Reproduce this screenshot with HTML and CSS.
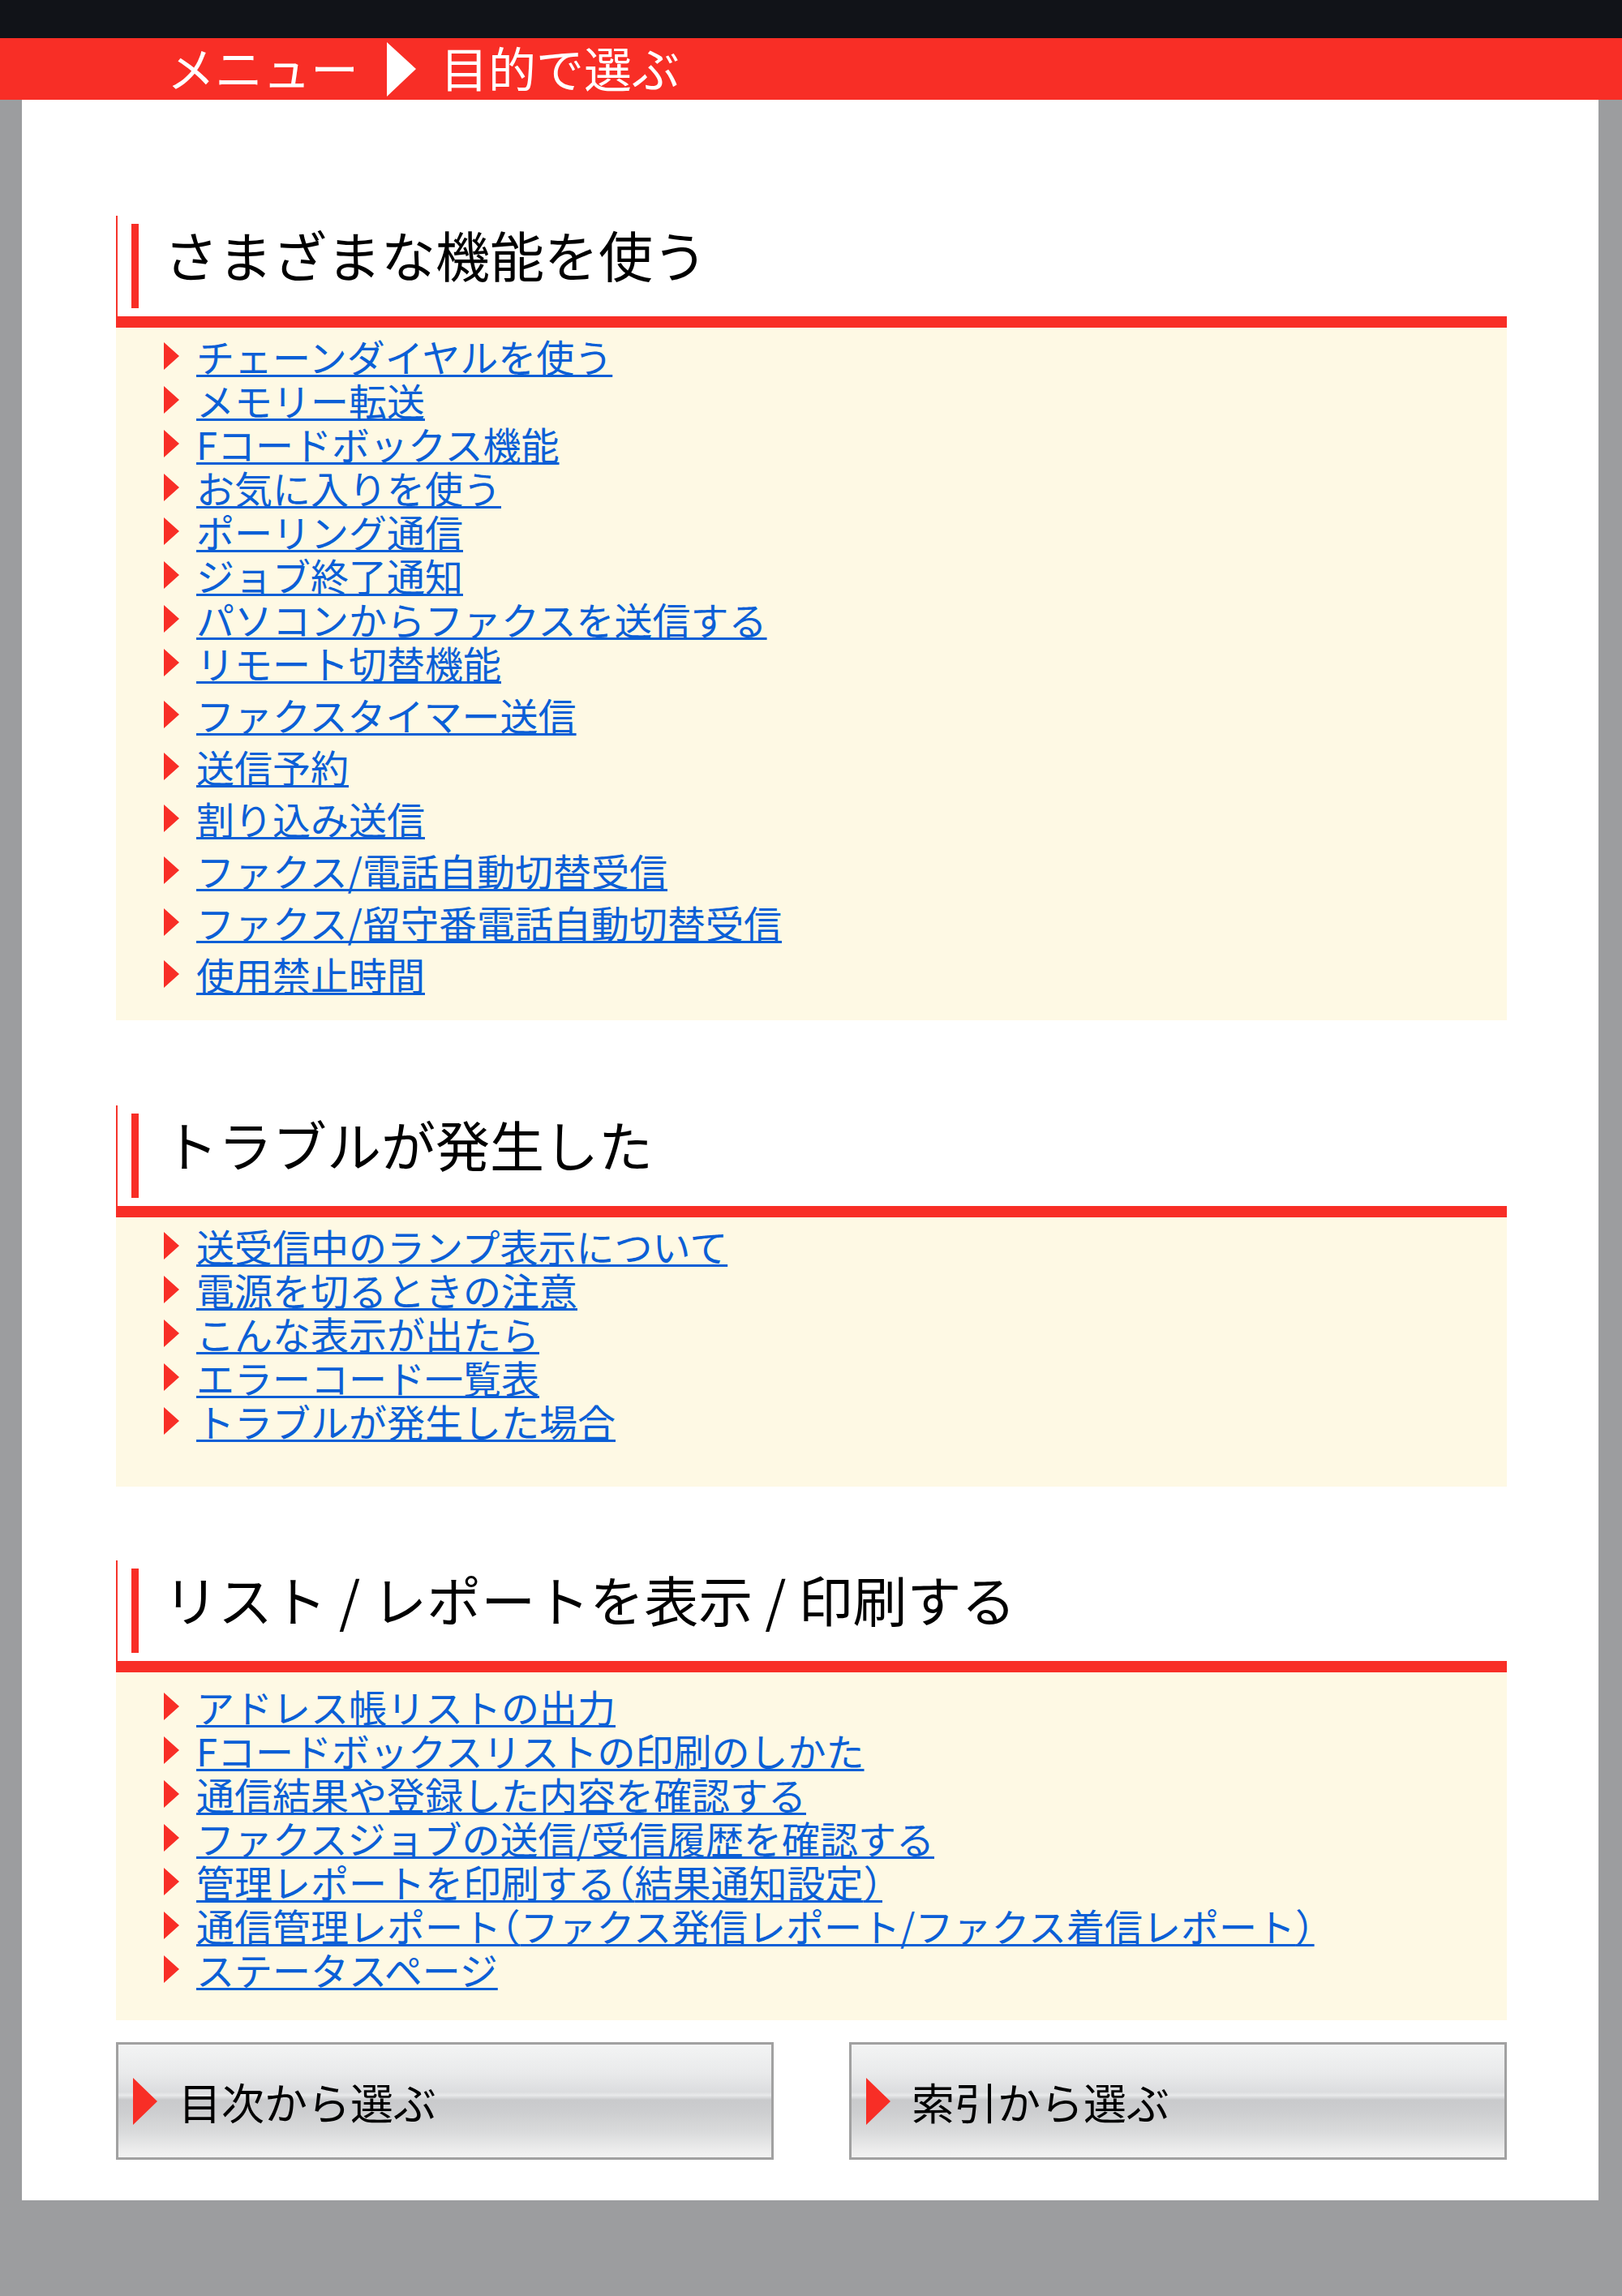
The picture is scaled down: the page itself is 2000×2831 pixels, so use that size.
FILE: index.html
```html
<!DOCTYPE html>
<html lang="ja">
<head>
<meta charset="utf-8">
<title>目的で選ぶ</title>
<link rel="stylesheet" href="styles.css">
</head>
<body>
<div class="statusbar"></div>
<header class="titlebar">
  <span class="crumb">メニュー</span>
  <span class="crumb-arrow"></span>
  <span class="crumb">目的で選ぶ</span>
</header>
<div class="frame">
  <main class="page">
    <section class="group g1">
      <h2 class="group-title"><span>さまざまな機能を使う</span></h2>
      <ul class="links">
        <li><a href="#">チェーンダイヤルを使う</a></li>
        <li><a href="#">メモリー転送</a></li>
        <li><a href="#">Fコードボックス機能</a></li>
        <li><a href="#">お気に入りを使う</a></li>
        <li><a href="#">ポーリング通信</a></li>
        <li><a href="#">ジョブ終了通知</a></li>
        <li><a href="#">パソコンからファクスを送信する</a></li>
        <li><a href="#">リモート切替機能</a></li>
        <li class="spaced"><a href="#">ファクスタイマー送信</a></li>
        <li class="spaced"><a href="#">送信予約</a></li>
        <li class="spaced"><a href="#">割り込み送信</a></li>
        <li class="spaced"><a href="#">ファクス/電話自動切替受信</a></li>
        <li class="spaced"><a href="#">ファクス/留守番電話自動切替受信</a></li>
        <li class="spaced"><a href="#">使用禁止時間</a></li>
      </ul>
    </section>
    <section class="group g2">
      <h2 class="group-title"><span>トラブルが発生した</span></h2>
      <ul class="links">
        <li><a href="#">送受信中のランプ表示について</a></li>
        <li><a href="#">電源を切るときの注意</a></li>
        <li><a href="#">こんな表示が出たら</a></li>
        <li><a href="#">エラーコード一覧表</a></li>
        <li><a href="#">トラブルが発生した場合</a></li>
      </ul>
    </section>
    <section class="group g3">
      <h2 class="group-title"><span>リスト / レポートを表示 / 印刷する</span></h2>
      <ul class="links">
        <li><a href="#">アドレス帳リストの出力</a></li>
        <li><a href="#">Fコードボックスリストの印刷のしかた</a></li>
        <li><a href="#">通信結果や登録した内容を確認する</a></li>
        <li><a href="#">ファクスジョブの送信/受信履歴を確認する</a></li>
        <li><a href="#">管理レポートを印刷する<span class="paren">（</span>結果通知設定<span class="paren">）</span></a></li>
        <li><a href="#">通信管理レポート<span class="paren">（</span>ファクス発信レポート/ファクス着信レポート<span class="paren">）</span></a></li>
        <li><a href="#">ステータスページ</a></li>
      </ul>
    </section>
    <nav class="btns">
      <a class="btn" href="#">目次から選ぶ</a>
      <a class="btn" href="#">索引から選ぶ</a>
    </nav>
  </main>
</div>
</body>
</html>
```
FILE: styles.css
```css
* { box-sizing: border-box; }

body {
  margin: 0;
  background: #9c9d9f;
  font-family: "Noto Sans CJK JP", "Noto Sans", sans-serif;
}

.statusbar {
  height: 47px;
  background: #111318;
}

.titlebar {
  height: 76px;
  background: #f82e26;
  display: flex;
  align-items: center;
  padding-left: 206px;
  padding-bottom: 6px;
  color: #fff;
  font-size: 59px;
  line-height: 1;
}

.crumb-arrow {
  width: 0;
  height: 0;
  border-left: 36px solid #fff;
  border-top: 33px solid transparent;
  border-bottom: 34px solid transparent;
  margin: 6px 30px 0 35px;
}

.frame {
  padding: 0 29px 118px 27px;
}

.page {
  background: #fff;
  padding: 143px 113px 50px 116px;
}

.group-title {
  margin: 0;
  height: 124px;
  border-left: 2px solid #f6342b;
  padding-left: 17px;
  display: flex;
  align-items: center;
  font-weight: normal;
  font-size: 67px;
  line-height: 80px;
  color: #000;
}

.group-title::before {
  content: "";
  flex: none;
  width: 9px;
  height: 104px;
  background: #f82e26;
  margin-right: 31px;
}

.group-title span {
  margin-bottom: 30px;
  white-space: pre;
}

.links {
  list-style: none;
  margin: 0;
  border-top: 14px solid #f82e26;
  background: #fef9e4;
  padding: 8px 0 30px 59px;
}

.links li {
  display: flex;
  align-items: center;
  height: 54px;
  font-size: 47px;
  line-height: 54px;
}

.links li::before {
  content: "";
  flex: none;
  width: 0;
  height: 0;
  border-left: 19px solid #f82e26;
  border-top: 17px solid transparent;
  border-bottom: 17px solid transparent;
  margin-right: 21px;
}

.links li.spaced {
  margin-top: 10px;
}

.links a {
  color: #0b5fd6;
  text-decoration: underline;
  text-decoration-thickness: 3px;
  text-underline-offset: 3px;
}

.paren {
  font-feature-settings: "halt";
}

.g2 { margin-top: 105px; }
.g2 .links { padding-bottom: 54px; }

.g3 { margin-top: 91px; }
.g3 .links { padding-top: 15px; padding-bottom: 36px; }

.btns {
  display: grid;
  grid-template-columns: 1fr 1fr;
  gap: 93px;
  margin-top: 27px;
}

.btn {
  height: 145px;
  border: 3px solid #a1a1a1;
  display: flex;
  align-items: center;
  padding-left: 18px;
  font-size: 53px;
  line-height: 64px;
  color: #000;
  text-decoration: none;
  background: linear-gradient(to bottom,
    #f3f4f4 0%,
    #e9eaeb 25%,
    #dcdddf 42%,
    #e8e9ea 45%,
    #c9cacc 49%,
    #cdced0 60%,
    #dadbdc 78%,
    #eeeeee 95%,
    #f3f3f3 100%);
}

.btn::before {
  content: "";
  flex: none;
  width: 0;
  height: 0;
  border-left: 30px solid #f82e26;
  border-top: 29px solid transparent;
  border-bottom: 29px solid transparent;
  margin-right: 26px;
}
```
